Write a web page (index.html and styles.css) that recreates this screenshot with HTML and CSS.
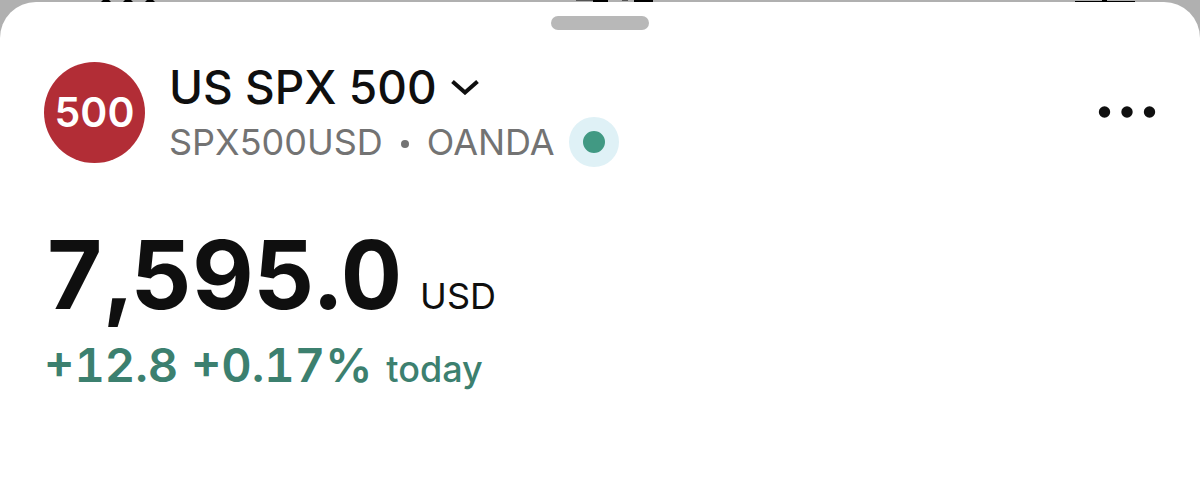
FILE: index.html
```html
<!DOCTYPE html>
<html lang="en">
<head>
    <meta charset="UTF-8">
    <meta name="viewport" content="width=device-width, initial-scale=1.0">
    <title>US SPX 500</title>

    <link rel="stylesheet" href="styles.css">
</head>
<body>
    <!-- page behind the sheet -->
    <div class="backdrop">
        <svg class="peek-dots" viewBox="0 0 56 2" aria-hidden="true">
            <path d="M1 2L3 0H9L11 2ZM23 2L25 0H31L33 2ZM45 2L47 0H53L55 2Z"/>
        </svg>
        <svg class="peek-title" viewBox="0 0 80 2" aria-hidden="true">
            <path d="M0 0H17V1H0ZM46 0H52V1H46Z" fill="#555"/>
            <path d="M17 0H32V2H17ZM58 0H77V2H58Z"/>
        </svg>
        <svg class="peek-icon" viewBox="0 0 60 2" aria-hidden="true">
            <path d="M0 1H60V2H0ZM27 0H32V1H27Z"/>
        </svg>
    </div>

    <main class="sheet">
        <div class="handle"></div>

        <header class="symbol-header">
            <div class="logo">500</div>

            <div class="symbol">
                <button class="symbol-name" type="button">
                    US SPX 500
                    <svg class="chevron" viewBox="0 0 28 16" aria-hidden="true">
                        <path d="M1.5 2.5L14 13.500L26.500 2.5"/>
                    </svg>
                </button>
                <div class="symbol-info">
                    <span>SPX500USD</span>
                    <span class="separator"></span>
                    <span>OANDA</span>
                    <span class="status"></span>
                </div>
            </div>

            <button class="more" type="button" aria-label="More">
                <svg viewBox="0 0 58 12" aria-hidden="true">
                    <circle cx="6.500" cy="6" r="5.700"/>
                    <circle cx="29" cy="6" r="5.700"/>
                    <circle cx="51.500" cy="6" r="5.700"/>
                </svg>
            </button>
        </header>

        <div class="price">
            <span class="price-value">7,595.0</span>
            <span class="price-currency">USD</span>
        </div>

        <div class="change">
            <span class="change-value">+12.8 +0.17%</span>
            <span class="change-period">today</span>
        </div>
    </main>
</body>
</html>
```

FILE: styles.css
```css
body {
    display: flex;
    flex-direction: column;
    min-height: 100vh;
    margin: 0;
    font-family: Inter, "Liberation Sans", sans-serif;
    color: #0f0f0f;
    background-color: #b0b0b0;
}

.backdrop {
    display: flex;
    justify-content: space-between;
    height: 2px;
    padding: 0 65px 0 100px;
}

.backdrop svg {
    height: 2px;
}

.peek-dots {
    width: 56px;
}

.peek-title {
    width: 80px;
}

.peek-icon {
    width: 60px;
}

.sheet {
    flex: 1;
    padding: 14px 44px 40px;
    background-color: white;
    border-radius: 36px 36px 0 0;
}

.handle {
    width: 98px;
    height: 14px;
    margin: 0 auto 27px;
    background-color: #b8b8b8;
    border-radius: 7px;
}

.symbol-header {
    display: flex;
    align-items: center;
    gap: 24px;
    margin-bottom: 60px;
}

.logo {
    width: 101px;
    height: 101px;
    border-radius: 50%;
    background-color: #b22d36;
    color: white;
    font-size: 41px;
    font-weight: 600;
    line-height: 101px;
    text-align: center;
}

.symbol {
    flex: 1;
}

button {
    padding: 0;
    border: none;
    background: none;
    color: inherit;
    font-family: inherit;
    cursor: pointer;
}

.symbol-name {
    display: flex;
    align-items: center;
    gap: 14px;
    font-size: 46px;
    font-weight: 500;
    line-height: 60px;
}

.chevron {
    width: 28px;
    height: 16px;
    fill: none;
    stroke: #0f0f0f;
    stroke-width: 4;
}

.symbol-info {
    display: flex;
    align-items: center;
    color: #737373;
    font-size: 36px;
    line-height: 50px;
}

.separator {
    width: 8px;
    height: 8px;
    margin: 4px 18px 0;
    border-radius: 50%;
    background-color: #737373;
}

.status {
    box-sizing: border-box;
    width: 50px;
    height: 50px;
    margin-left: 14px;
    border: 14px solid #dff1f6;
    border-radius: 50%;
    background-color: #419983;
}

.more svg {
    display: block;
    width: 58px;
    height: 12px;
    fill: #0f0f0f;
}

.price {
    display: flex;
    align-items: baseline;
    gap: 18px;
    margin-bottom: 14px;
    font-kerning: none;
    font-variant-numeric: tabular-nums;
}

.price-value {
    font-size: 95px;
    font-weight: 700;
    line-height: 96px;
}

.price-currency {
    font-size: 36px;
}

.change {
    display: flex;
    align-items: baseline;
    gap: 14px;
    color: #3c806f;
    font-variant-numeric: tabular-nums;
}

.change-value {
    font-size: 47px;
    font-weight: 600;
    line-height: 56px;
}

.change-period {
    font-size: 36px;
    font-weight: 500;
}
```
